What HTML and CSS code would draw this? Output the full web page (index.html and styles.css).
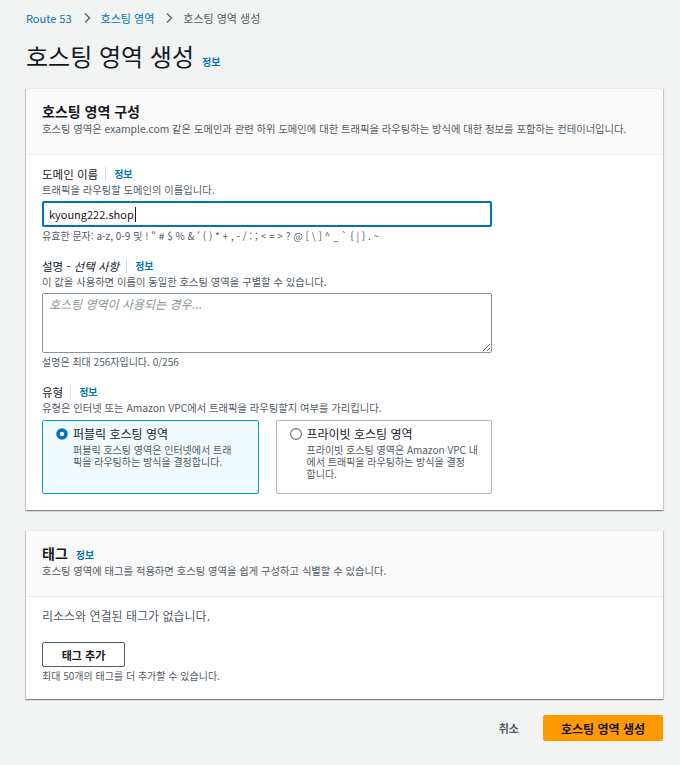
FILE: index.html
```html
<!DOCTYPE html>
<html lang="ko">
<head>
  <meta charset="UTF-8">
  <title>호스팅 영역 생성</title>
  <link rel="stylesheet" href="styles.css">
</head>
<body>
  <div class="page">
    <nav class="crumbs">
      <a href="#">Route 53</a>
      <svg class="chev" width="8" height="12" viewBox="0 0 8 12"><path d="M2 1.5l4.5 4.5L2 10.5" fill="none" stroke="#687078" stroke-width="1.6"/></svg>
      <a href="#">호스팅 영역</a>
      <svg class="chev" width="8" height="12" viewBox="0 0 8 12"><path d="M2 1.5l4.5 4.5L2 10.5" fill="none" stroke="#687078" stroke-width="1.6"/></svg>
      <span class="current">호스팅 영역 생성</span>
    </nav>

    <h1 class="page-title">호스팅 영역 생성 <a class="info" href="#">정보</a></h1>

    <section class="panel">
      <div class="panel-head">
        <h2>호스팅 영역 구성</h2>
        <p class="panel-desc">호스팅 영역은 example.com 같은 도메인과 관련 하위 도메인에 대한 트래픽을 라우팅하는 방식에 대한 정보를 포함하는 컨테이너입니다.</p>
      </div>
      <div class="panel-body">
        <div class="field">
          <div class="field-label"><span>도메인 이름</span><span class="sep"></span><a class="info" href="#">정보</a></div>
          <p class="field-desc">트래픽을 라우팅할 도메인의 이름입니다.</p>
          <div class="text-input"><span>kyoung222.shop</span><span class="caret"></span></div>
          <p class="constraint">유효한 문자: a-z, 0-9 및 ! " # $ % &amp; ' ( ) * + , - / : ; &lt; = &gt; ? @ [ \ ] ^ _ ` { | } . ~</p>
        </div>

        <div class="field">
          <div class="field-label"><span>설명 - <i>선택 사항</i></span><span class="sep"></span><a class="info" href="#">정보</a></div>
          <p class="field-desc">이 값을 사용하면 이름이 동일한 호스팅 영역을 구별할 수 있습니다.</p>
          <textarea class="text-area" placeholder="호스팅 영역이 사용되는 경우..."></textarea>
          <p class="constraint">설명은 최대 256자입니다. 0/256</p>
        </div>

        <div class="field">
          <div class="field-label"><span>유형</span><span class="sep"></span><a class="info" href="#">정보</a></div>
          <p class="field-desc">유형은 인터넷 또는 Amazon VPC에서 트래픽을 라우팅할지 여부를 가리킵니다.</p>
          <div class="tiles">
            <label class="tile selected">
              <svg class="radio" width="12" height="12" viewBox="0 0 12 12"><circle cx="6" cy="6" r="4" fill="#fff" stroke="#0073bb" stroke-width="3.5"/></svg>
              <span class="tile-title">퍼블릭 호스팅 영역</span>
              <span class="tile-desc">
                <span class="line">퍼블릭 호스팅 영역은 인터넷에서 트래</span>
                <span class="line">픽을 라우팅하는 방식을 결정합니다.</span>
              </span>
            </label>
            <label class="tile">
              <svg class="radio" width="12" height="12" viewBox="0 0 12 12"><circle cx="6" cy="6" r="5.4" fill="#fff" stroke="#687078" stroke-width="1.1"/></svg>
              <span class="tile-title">프라이빗 호스팅 영역</span>
              <span class="tile-desc">
                <span class="line">프라이빗 호스팅 영역은 Amazon VPC 내</span>
                <span class="line">에서 트래픽을 라우팅하는 방식을 결정</span>
                <span class="line">합니다.</span>
              </span>
            </label>
          </div>
        </div>
      </div>
    </section>

    <section class="panel">
      <div class="panel-head">
        <h2>태그 <a class="info" href="#">정보</a></h2>
        <p class="panel-desc">호스팅 영역에 태그를 적용하면 호스팅 영역을 쉽게 구성하고 식별할 수 있습니다.</p>
      </div>
      <div class="panel-body tags-body">
        <p class="empty">리소스와 연결된 태그가 없습니다.</p>
        <button class="btn-normal">태그 추가</button>
        <p class="constraint">최대 50개의 태그를 더 추가할 수 있습니다.</p>
      </div>
    </section>

    <div class="actions">
      <button class="btn-link">취소</button>
      <button class="btn-primary">호스팅 영역 생성</button>
    </div>
  </div>
</body>
</html>
```

FILE: styles.css
```css
body {
  margin: 0;
  background-color: #f2f3f3;
  color: #16191f;
  font-family: "Noto Sans CJK KR", "Noto Sans", sans-serif;
}

a {
  text-decoration: none;
}

.page {
  padding: 10px 17px 24px 26px;
}

/* 상단 경로 */
.crumbs {
  display: flex;
  align-items: center;
  font-size: 11px;
  line-height: 16px;
}

.crumbs a {
  color: #0073bb;
}

.crumbs .chev {
  margin: 0 10px 0 11px;
}

.crumbs .current {
  color: #545b64;
}

.page-title {
  display: flex;
  align-items: baseline;
  gap: 8px;
  margin: 14px 0 16px;
  font-size: 24px;
  line-height: 32px;
  font-weight: 400;
}

.info {
  color: #0073bb;
  font-size: 10px;
  line-height: 14px;
  font-weight: 700;
}

/* 패널 */
.panel {
  background-color: #fff;
  border-top: 1px solid #eaeded;
  box-shadow: 0 1px 1px 0 rgba(0, 28, 36, 0.3), 1px 1px 1px 0 rgba(0, 28, 36, 0.15), -1px 1px 1px 0 rgba(0, 28, 36, 0.15);
}

.panel + .panel {
  margin-top: 20px;
}

.panel-head {
  background-color: #fafafa;
  border-bottom: 1px solid #eaeded;
  padding: 12px 16px 17px;
}

.panel-head h2 {
  display: flex;
  align-items: baseline;
  gap: 8px;
  margin: 0;
  font-size: 14px;
  line-height: 20px;
  font-weight: 700;
}

.panel-desc {
  margin: 0;
  font-size: 10.3px;
  line-height: 16px;
  color: #545b64;
}

.panel-body {
  padding: 11px 16px 16px;
}

.field + .field {
  margin-top: 15px;
}

.field-label {
  display: flex;
  align-items: center;
  font-size: 11.5px;
  line-height: 16px;
}

.sep {
  width: 1px;
  height: 14px;
  background-color: #d5dbdb;
  margin: 0 8px 0 7px;
}

.field-desc {
  margin: 0;
  font-size: 10.3px;
  line-height: 16px;
  color: #545b64;
}

.constraint {
  margin: 2px 0 0;
  font-size: 10px;
  line-height: 14px;
  color: #545b64;
}

.text-input {
  display: flex;
  align-items: center;
  box-sizing: border-box;
  max-width: 450px;
  height: 26px;
  margin-top: 3px;
  padding: 0 5px;
  border: 2px solid #0073bb;
  border-radius: 2px;
  background-color: #fff;
  font-size: 11px;
}

.caret {
  width: 1px;
  height: 15px;
  margin-left: 1px;
  background-color: #16191f;
}

.text-area {
  display: block;
  box-sizing: border-box;
  width: 450px;
  height: 60px;
  margin-top: 3px;
  padding: 2px 6px;
  border: 1px solid #879596;
  border-radius: 2px;
  font-family: inherit;
  font-size: 12px;
  line-height: 16px;
  resize: vertical;
}

.text-area::placeholder {
  color: #879596;
  font-style: italic;
}

/* 유형 선택 */
.tiles {
  display: flex;
  gap: 17px;
  max-width: 450px;
  margin-top: 4px;
}

.tile {
  flex: 1;
  display: grid;
  grid-template-columns: 12px 1fr;
  column-gap: 5px;
  align-content: start;
  padding: 5px 6px 13px 13px;
  border: 1px solid #aab7b8;
  border-radius: 2px;
  background-color: #fff;
  cursor: pointer;
}

.tile.selected {
  border-color: #00a1c9;
  background-color: #f1faff;
}

.radio {
  align-self: center;
}

.tile-title {
  font-size: 12px;
  line-height: 16px;
}

.tile-desc {
  grid-column: 2;
  margin-top: 2px;
  font-size: 10px;
  color: #545b64;
}

.tile-desc .line {
  display: block;
  height: 12px;
  line-height: 12px;
  white-space: nowrap;
}

/* 태그 */
.tags-body {
  padding-top: 11px;
}

.empty {
  margin: 0;
  font-size: 12px;
  line-height: 16px;
  color: #545b64;
}

.btn-normal {
  display: block;
  width: 83px;
  height: 25px;
  margin-top: 18px;
  padding: 0;
  border: 1px solid #545b64;
  border-radius: 2px;
  background-color: #fff;
  color: #16191f;
  font-family: inherit;
  font-size: 11px;
  font-weight: 700;
}

.actions {
  display: flex;
  justify-content: flex-end;
  align-items: center;
  gap: 24px;
  margin-top: 16px;
}

.btn-link {
  padding: 0;
  border: none;
  background: none;
  color: #545b64;
  font-family: inherit;
  font-size: 11px;
  font-weight: 700;
}

.btn-primary {
  width: 120px;
  height: 26px;
  padding: 0;
  border: none;
  border-radius: 2px;
  background-color: #ff9900;
  color: #16191f;
  font-family: inherit;
  font-size: 12px;
  font-weight: 700;
}
```
